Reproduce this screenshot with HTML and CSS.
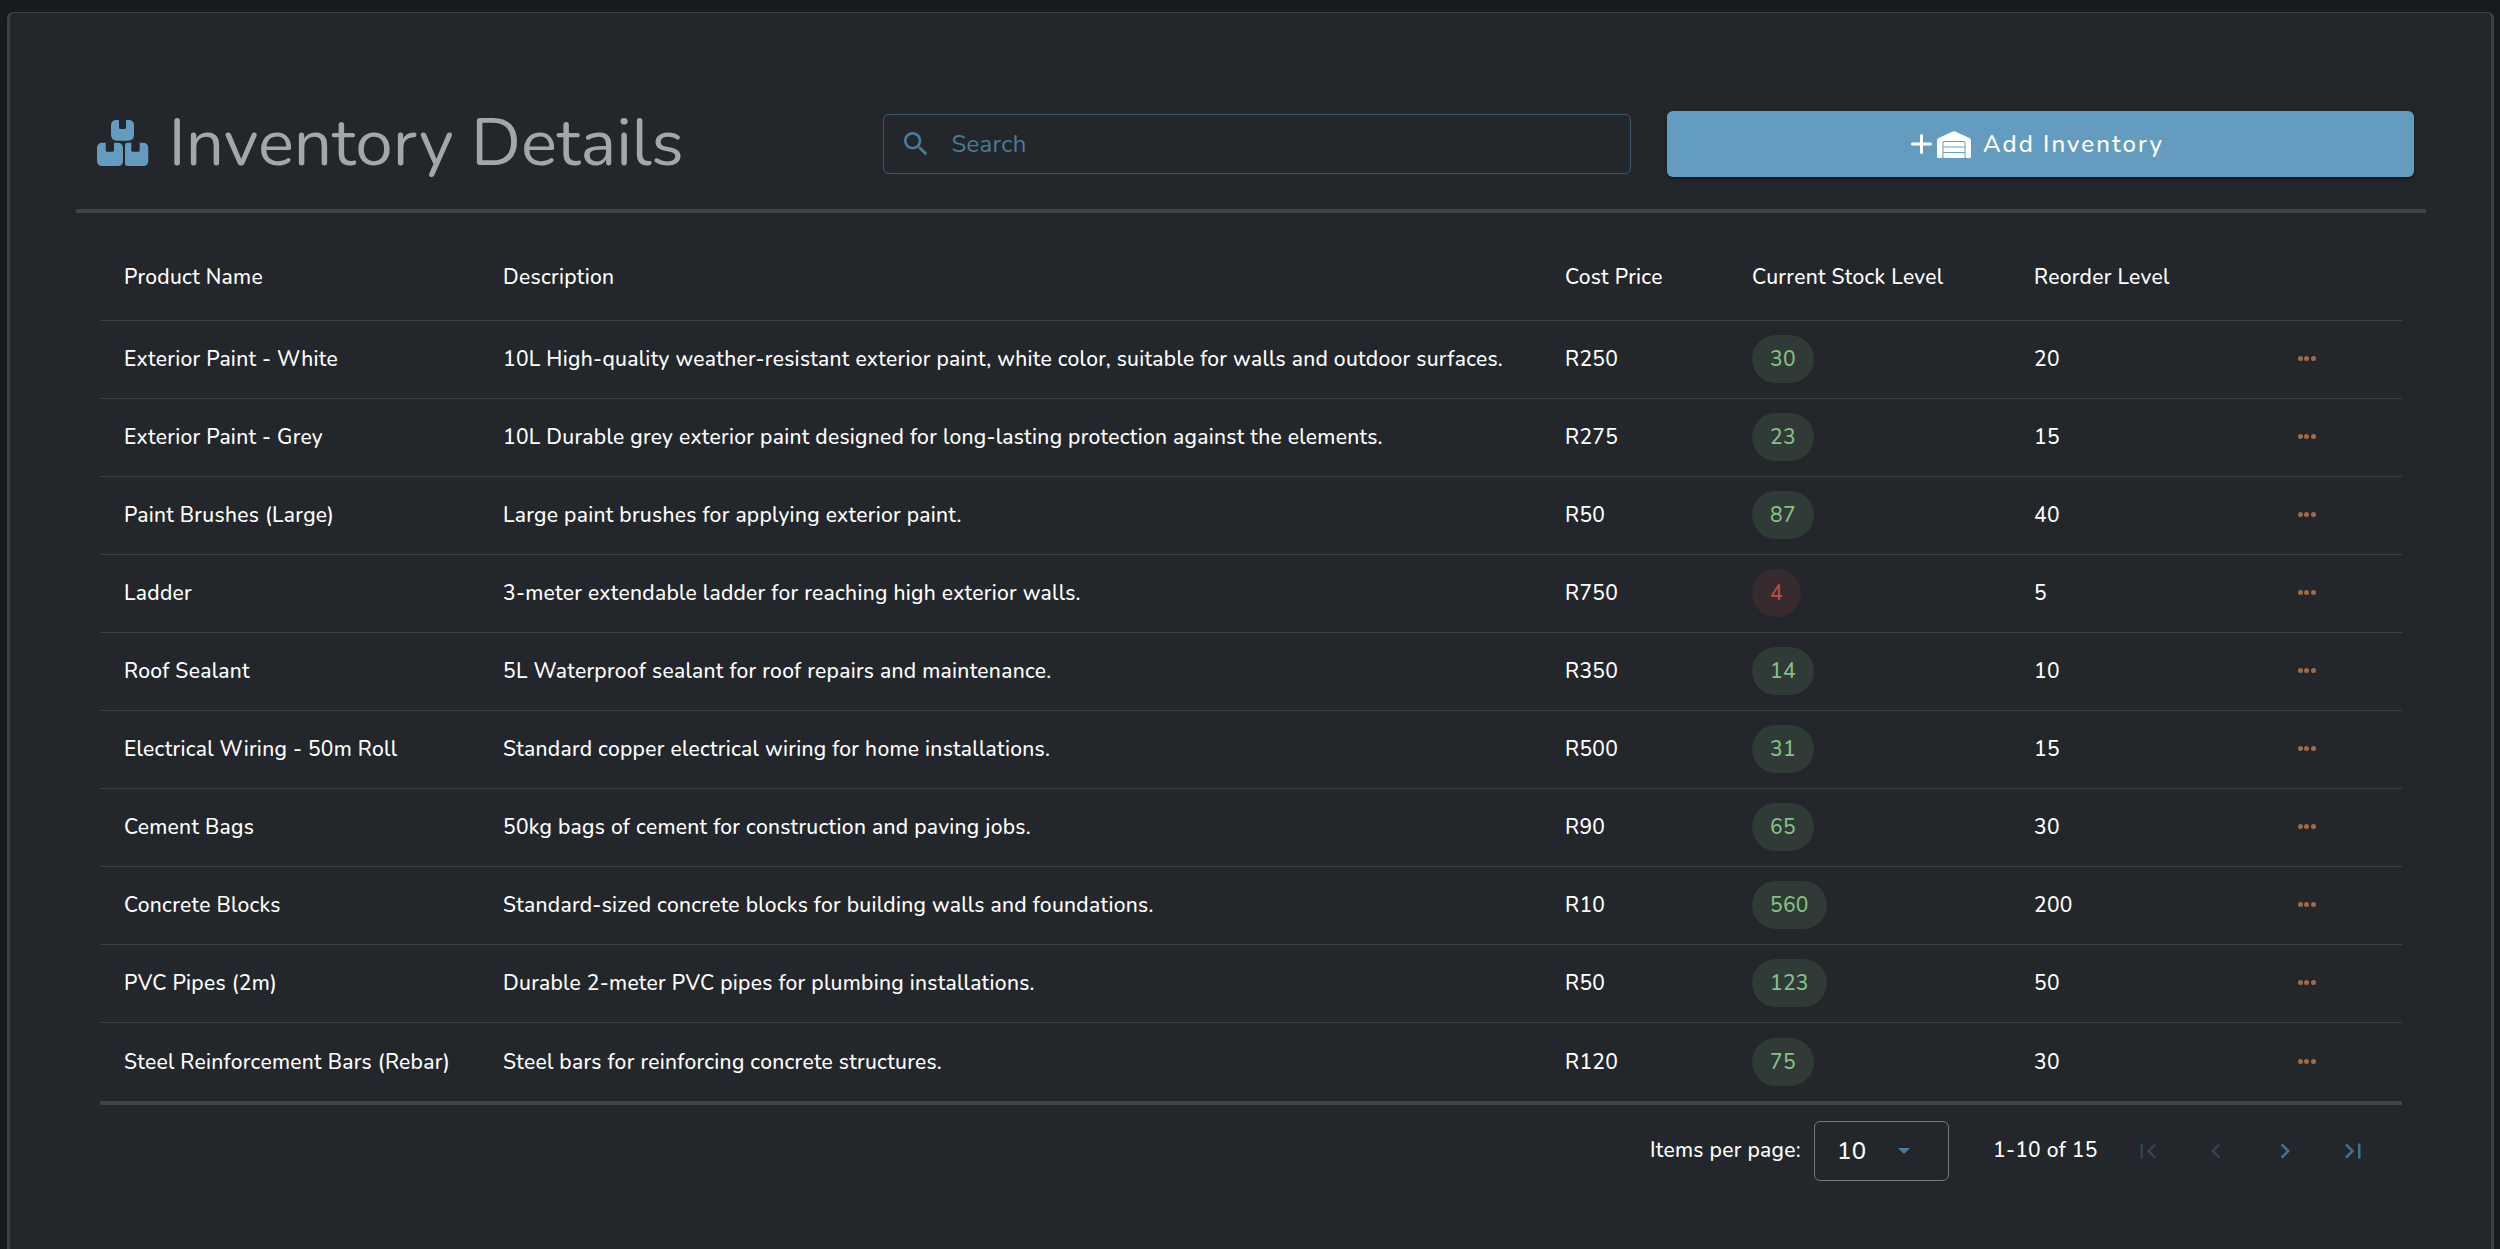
FILE: index.html
```
<!DOCTYPE html>
<html lang="en">
<head>
<meta charset="utf-8">
<title>Inventory Details</title>
<link rel="stylesheet" href="styles.css">
</head>
<body>
<main class="card">
  <header class="toolbar">
    <h1 class="title">
      <svg class="title-icon" viewBox="0 0 52 46" aria-hidden="true">
        <path d="M19.5 0H22V7.5Q22 9 23.5 9H27.500Q29 9 29 7.500V0H31.500Q37 0 37 5.500V14.500Q37 20.700 31 20.700H20Q14 20.700 14 14.500V5.500Q14 0 19.500 0Z"/>
        <path d="M5.500 22.700H8.700V30.200Q8.700 31.700 10.200 31.700H15.500Q17 31.700 17 30.200V22.700H20.500Q26 22.700 26 28.500V40.500Q26 46 20.500 46H5.500Q0 46 0 40.500V28.500Q0 22.700 5.500 22.700Z"/>
        <path d="M28 25Q28 22.700 31 22.700H34.300V30.200Q34.300 31.700 35.800 31.700H41.200Q42.700 31.700 42.700 30.200V22.700H46Q51.300 22.700 51.300 28.500V40.500Q51.300 46 46 46H30.500Q28 46 28 43.500Z"/>
      </svg>
      <span>Inventory Details</span>
    </h1>
    <label class="search">
      <svg class="search-icon" viewBox="0 0 24 24" aria-hidden="true"><path d="M15.500 14h-.79l-.28-.27C15.410 12.590 16 11.110 16 9.500 16 5.910 13.090 3 9.500 3S3 5.910 3 9.500 5.910 16 9.500 16c1.610 0 3.090-.59 4.230-1.570l.27.28v.79l5 4.990L20.490 19l-4.990-5zm-6 0C7.010 14 5 11.990 5 9.500S7.010 5 9.500 5 14 7.010 14 9.500 11.990 14 9.500 14z"/></svg>
      <span>Search</span>
    </label>
    <button class="add" type="button">
      <svg class="plus" viewBox="0 0 21 20" aria-hidden="true"><path d="M10.500 1.500V18.500M1.500 10H19.500"/></svg>
      <svg class="warehouse" viewBox="0 0 34 27" aria-hidden="true">
        <path d="M0 9.500Q0 7.800 1.600 7L15.800.5Q17 0 18.200.5L32.400 7Q34 7.800 34 9.500V25.500Q34 27 32.500 27H30Q28.500 27 28.500 25.500V11.500Q28.500 10 27 10H7Q5.500 10 5.500 11.500V25.500Q5.500 27 4 27H1.500Q0 27 0 25.500Z"/>
        <path d="M6.500 11H27.500V15.500H6.500ZM6.500 16.500H27.500V21H6.500ZM6.500 22H27.500V27H6.500Z"/>
      </svg>
      <span>Add Inventory</span>
    </button>
  </header>

  <table class="stock">
    <colgroup><col class="c-name"><col class="c-desc"><col class="c-cost"><col class="c-level"><col class="c-reorder"><col></colgroup>
    <thead><tr><th>Product Name</th><th>Description</th><th>Cost Price</th><th>Current Stock Level</th><th>Reorder Level</th><th></th></tr></thead>
    <tbody>
      <tr><td>Exterior Paint - White</td><td>10L High-quality weather-resistant exterior paint, white color, suitable for walls and outdoor surfaces.</td><td>R250</td><td><span class="badge">30</span></td><td>20</td><td><span class="more"><i></i><i></i><i></i></span></td></tr>
      <tr><td>Exterior Paint - Grey</td><td>10L Durable grey exterior paint designed for long-lasting protection against the elements.</td><td>R275</td><td><span class="badge">23</span></td><td>15</td><td><span class="more"><i></i><i></i><i></i></span></td></tr>
      <tr><td>Paint Brushes (Large)</td><td>Large paint brushes for applying exterior paint.</td><td>R50</td><td><span class="badge">87</span></td><td>40</td><td><span class="more"><i></i><i></i><i></i></span></td></tr>
      <tr><td>Ladder</td><td>3-meter extendable ladder for reaching high exterior walls.</td><td>R750</td><td><span class="badge low">4</span></td><td>5</td><td><span class="more"><i></i><i></i><i></i></span></td></tr>
      <tr><td>Roof Sealant</td><td>5L Waterproof sealant for roof repairs and maintenance.</td><td>R350</td><td><span class="badge">14</span></td><td>10</td><td><span class="more"><i></i><i></i><i></i></span></td></tr>
      <tr><td>Electrical Wiring - 50m Roll</td><td>Standard copper electrical wiring for home installations.</td><td>R500</td><td><span class="badge">31</span></td><td>15</td><td><span class="more"><i></i><i></i><i></i></span></td></tr>
      <tr><td>Cement Bags</td><td>50kg bags of cement for construction and paving jobs.</td><td>R90</td><td><span class="badge">65</span></td><td>30</td><td><span class="more"><i></i><i></i><i></i></span></td></tr>
      <tr><td>Concrete Blocks</td><td>Standard-sized concrete blocks for building walls and foundations.</td><td>R10</td><td><span class="badge">560</span></td><td>200</td><td><span class="more"><i></i><i></i><i></i></span></td></tr>
      <tr><td>PVC Pipes (2m)</td><td>Durable 2-meter PVC pipes for plumbing installations.</td><td>R50</td><td><span class="badge">123</span></td><td>50</td><td><span class="more"><i></i><i></i><i></i></span></td></tr>
      <tr><td>Steel Reinforcement Bars (Rebar)</td><td>Steel bars for reinforcing concrete structures.</td><td>R120</td><td><span class="badge">75</span></td><td>30</td><td><span class="more"><i></i><i></i><i></i></span></td></tr>
    </tbody>
  </table>

  <footer class="pager">
    <span class="pager-label">Items per page:</span>
    <div class="select"><span>10</span><i class="caret"></i></div>
    <span class="range">1-10 of 15</span>
    <nav class="pages">
      <svg class="off" viewBox="0 0 24 24"><path d="M18.410 16.590L13.820 12l4.590-4.590L17 6l-6 6 6 6zM6 6h2v12H6z"/></svg>
      <svg class="off" viewBox="0 0 24 24"><path d="M15.410 7.410L14 6l-6 6 6 6 1.410-1.410L10.830 12z"/></svg>
      <svg viewBox="0 0 24 24"><path d="M10 6L8.590 7.410 13.170 12l-4.580 4.590L10 18l6-6z"/></svg>
      <svg viewBox="0 0 24 24"><path d="M5.590 7.410L10.180 12l-4.590 4.590L7 18l6-6-6-6zM16 6h2v12h-2z"/></svg>
    </nav>
  </footer>
</main>
</body>
</html>
```
FILE: styles.css
```
* { box-sizing: border-box; }

body {
  margin: 0;
  height: 1249px;
  overflow: hidden;
  padding: 12px 6px 0 7px;
  background: #171b1d;
  color: #fff;
  font: 500 21px/30px Nunito, "Open Sans", sans-serif;
  letter-spacing: .29px;
}

.card {
  height: 1260px;
  padding: 0 65px 0 66px;
  border: 3px solid #3c4043;
  border-top-width: 1px;
  border-radius: 6px 6px 0 0;
  background: #23272b;
}

/* Toolbar */
.toolbar {
  display: flex;
  align-items: center;
  height: 200px;
  padding: 66px 12px 0 21px;
  border-bottom: 4px solid #3f4347;
}

.title {
  display: flex;
  align-items: center;
  gap: 19.5px;
  width: 786px;
  margin: 0;
  color: #a3a6aa;
  font-size: 67.4px;
  font-weight: 400;
  line-height: 80px;
  letter-spacing: 0;
  white-space: nowrap;
}
.title span { padding-bottom: 2px; }
.title-icon { width: 52px; height: 46px; margin-bottom: 2px; fill: #649cc0; }

.search {
  display: flex;
  align-items: center;
  width: 748px;
  height: 60px;
  margin-right: 36px;
  padding-left: 16px;
  border: 1px solid #3b5666;
  border-radius: 6px;
  color: #4c7a97;
  font-size: 24px;
  font-weight: 400;
}
.search-icon { width: 32px; height: 32px; margin-right: 19.5px; fill: currentColor; }

.add {
  display: flex;
  align-items: center;
  justify-content: center;
  width: 747px;
  height: 66px;
  padding: 0 6px 0 0;
  border: 0;
  border-radius: 6px;
  background: #649cc0;
  box-shadow: 0 4px 2px -3px rgba(0, 0, 0, .3), 0 3px 5px rgba(0, 0, 0, .25);
  color: #fff;
  font: inherit;
  font-size: 24px;
  font-weight: 500;
  letter-spacing: 2.05px;
}
.plus { width: 21px; height: 20px; margin-right: 5px; fill: none; stroke: #fff; stroke-width: 3; stroke-linecap: round; }
.warehouse { width: 34px; height: 27px; margin-right: 12px; fill: #fff; }

/* Table */
.stock {
  width: 2302px;
  margin: 30px 0 0 24px;
  border-collapse: separate;
  border-spacing: 0;
  table-layout: fixed;
}
.c-name { width: 379px; }
.c-desc { width: 1062px; }
.c-cost { width: 187px; }
.c-level { width: 282px; }
.c-reorder { width: 264px; }

.stock th, .stock td {
  height: 78px;
  padding: 0 0 1px 24px;
  border-bottom: 1px solid #3c4043;
  text-align: left;
  font-weight: 500;
  white-space: nowrap;
}
.stock th { padding-bottom: 9px; }
.stock tbody tr:last-child td { height: 82px; padding-bottom: 0; border-bottom: 4px solid #3f4347; }

.badge {
  display: block;
  width: fit-content;
  height: 48px;
  padding: 0 18px;
  border-radius: 24px;
  background: #303a37;
  color: #84c183;
  line-height: 48px;
}
.badge.low { background: #382b2f; color: #c34a4c; }

.more { display: flex; gap: 1.5px; margin: 0 0 1px -.5px; }
.more i { width: 5px; height: 5px; border-radius: 50%; background: #a06b43; }

/* Pagination */
.pager {
  display: flex;
  align-items: center;
  height: 92px;
  padding-left: 1574px;
}
.pager-label { width: 164px; padding-bottom: 2px; }
.select {
  display: flex;
  align-items: center;
  justify-content: space-between;
  width: 135px;
  height: 60px;
  padding: 0 38px 0 22px;
  border: 1px solid #74787b;
  border-radius: 6px;
  font-size: 24px;
}
.caret { border: 6.500px solid transparent; border-top-color: #4a7c9b; border-bottom: 0; }
.range { width: 139.5px; margin-left: 44px; padding-bottom: 2px; }
.pages { display: flex; gap: 38.500px; }
.pages svg { width: 30px; height: 30px; fill: #46718c; }
.pages .off { fill: #304552; }
```
